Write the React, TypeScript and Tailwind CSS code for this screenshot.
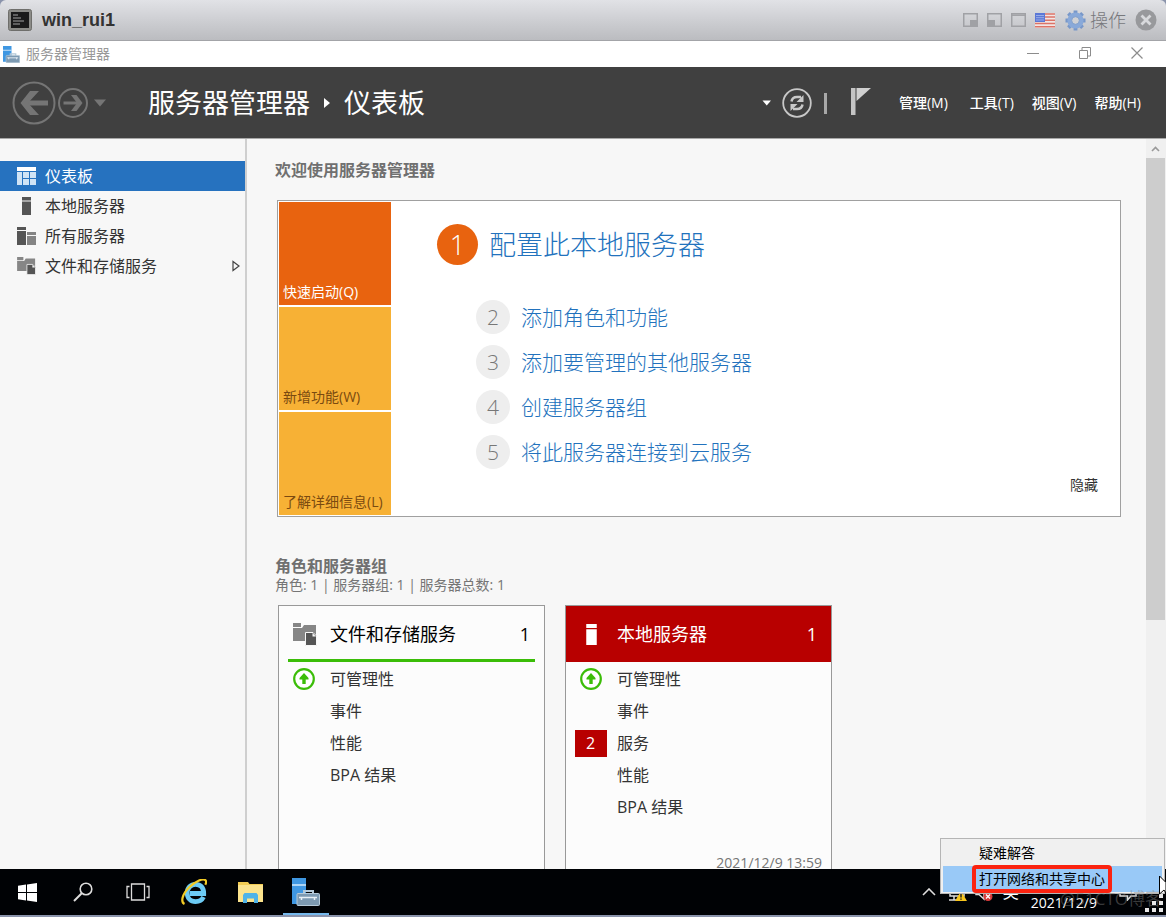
import { Fragment, ReactNode } from 'react';

type IconProps = { className?: string };

const FONT = 'font-["Open_Sans","Noto_Sans_CJK_SC",sans-serif]';

export default function App() {
  return (
    <div className={`relative flex h-screen flex-col overflow-hidden bg-[#8a93ab] ${FONT}`}>
      <ConsoleBar />
      <WindowBar />
      <Header />
      <div className="flex min-h-0 flex-1 border-t border-[#a8a8a8] bg-[#f7f7f7]">
        <Sidebar />
        <Dashboard />
        <Scrollbar />
      </div>
      <Taskbar />
      <NetworkMenu />
    </div>
  );
}

/* ---------- top bars ---------- */

function ConsoleBar() {
  return (
    <div className="flex h-[41px] shrink-0 items-center justify-between rounded-t-md border-b border-[#a3a4a8] bg-linear-to-b from-[#e1e2e6] to-[#bbbcc0] pr-[9px] pl-2">
      <div className="flex items-center gap-[10px]">
        <svg viewBox="0 0 24 22" className="h-[22px] w-6">
          <rect x="0.5" y="0.5" width="23" height="21" rx="2" fill="#8b8b87" stroke="#6e6e6b" />
          <rect x="3" y="3" width="18" height="16" fill="#1b1b1b" />
          <path d="M5 6h5M5 9h8M5 12h11M5 15h7" stroke="#777" strokeWidth="1.5" />
        </svg>
        <h1 className='font-["Liberation_Sans",sans-serif] text-[18px] leading-6 font-bold text-[#333]'>win_rui1</h1>
      </div>
      <div className="flex items-center text-[#a0a1a5]">
        <button aria-label="Dock right" className="mr-[9px]">
          <svg viewBox="0 0 15 14" className="h-[14px] w-[15px]">
            <rect x="0.75" y="0.75" width="13.5" height="12.5" fill="none" stroke="currentColor" strokeWidth="1.5" />
            <rect x="7" y="7" width="7" height="6" fill="currentColor" />
          </svg>
        </button>
        <button aria-label="Dock left" className="mr-[9px]">
          <svg viewBox="0 0 15 14" className="h-[14px] w-[15px]">
            <rect x="0.75" y="0.75" width="13.5" height="12.5" fill="none" stroke="currentColor" strokeWidth="1.5" />
            <rect x="1" y="7" width="7" height="6" fill="currentColor" />
          </svg>
        </button>
        <button aria-label="Maximize console" className="mr-[9px]">
          <svg viewBox="0 0 15 14" className="h-[14px] w-[15px]">
            <rect x="0.75" y="0.75" width="13.5" height="12.5" fill="none" stroke="currentColor" strokeWidth="1.5" />
            <path d="M1 2.2h13" stroke="currentColor" strokeWidth="1.5" />
          </svg>
        </button>
        <button aria-label="Keyboard layout" className="mr-[10px]">
          <svg viewBox="0 0 20 15" className="h-[15px] w-5">
            <rect width="20" height="15" fill="#f2e6e4" />
            <path d="M0 1h20M0 4h20M0 7.2h20M0 10.5h20M0 13.8h20" stroke="#dc7468" strokeWidth="1.5" />
            <rect width="10" height="9" fill="#5b78d6" />
            <path d="M1.5 2.5h8M1.5 4.7h8M1.5 7h8" stroke="#dbe3fa" strokeDasharray="1 1" />
          </svg>
        </button>
        <button className="mr-[9px] flex items-center gap-1 text-[18px] leading-6 font-light text-[#77787c]">
          <GearIcon className="size-[21px]" />
          操作
        </button>
        <button aria-label="Close console">
          <svg viewBox="0 0 22 22" className="size-[22px]">
            <circle cx="11" cy="11" r="10.5" fill="#98999c" />
            <path d="m6.5 6.5 9 9m0-9-9 9" stroke="#d8d9dc" strokeWidth="2.8" />
          </svg>
        </button>
      </div>
    </div>
  );
}

function GearIcon({ className }: IconProps) {
  return (
    <svg viewBox="0 0 22 22" className={className}>
      <g stroke="#7797c9" strokeWidth="4">
        <path d="M11 0.5v21M0.5 11h21M3.6 3.6l14.8 14.8M18.4 3.6 3.6 18.4" />
      </g>
      <circle cx="11" cy="11" r="8.5" fill="#89a9d9" />
      <circle cx="11" cy="11" r="4" fill="#d0d1d4" stroke="#7f9dcb" />
    </svg>
  );
}

function WindowBar() {
  return (
    <div className="flex h-[26px] shrink-0 items-center justify-between bg-white pr-[22px] pl-[3px]">
      <div className="flex items-center gap-[6px]">
        <ServerManagerIcon className="size-[17px]" />
        <span className="text-[14px] leading-5 text-[#999]">服务器管理器</span>
      </div>
      <div className="flex items-center gap-[38px] pb-[2px] text-[#8c8c8c]">
        <button aria-label="Minimize">
          <svg viewBox="0 0 14 14" className="size-[14px]">
            <path d="M1 7.5h12" stroke="currentColor" />
          </svg>
        </button>
        <button aria-label="Restore">
          <svg viewBox="0 0 14 14" className="size-[14px]" fill="none" stroke="currentColor">
            <path d="M1.5 4.5h8v8h-8zM4 4V1.5h8.5v8.5H10" />
          </svg>
        </button>
        <button aria-label="Close">
          <svg viewBox="0 0 14 14" className="size-[14px]">
            <path d="m1.5 1.5 11 11m0-11-11 11" stroke="currentColor" strokeWidth="1.2" />
          </svg>
        </button>
      </div>
    </div>
  );
}

function ServerManagerIcon({ className }: IconProps) {
  return (
    <svg viewBox="0 0 28 28" className={className}>
      <path d="M0 0h14v26H0z" fill="#3f97e2" />
      <path d="M0 7h14" stroke="#d5eafb" strokeWidth="1.5" />
      <path d="M12 16v-3h9v3" fill="none" stroke="#b5c9d8" strokeWidth="2" />
      <rect x="5" y="15.5" width="22.5" height="12" rx="1" fill="#7d9ab2" stroke="#b5c9d8" />
      <path d="M7 19.5h18M9.5 19v3M22.5 19v3" stroke="#e8f0f6" strokeWidth="1.5" />
    </svg>
  );
}

/* ---------- application header ---------- */

const menus = ['管理(M)', '工具(T)', '视图(V)', '帮助(H)'];

function Header() {
  return (
    <header className="flex h-[71px] shrink-0 items-center justify-between bg-[#404040] pt-px pr-[25px] pl-3 text-white">
      <div className="flex items-center">
        <button aria-label="Back">
          <svg viewBox="0 0 44 44" className="size-11" fill="none" stroke="#757575">
            <circle cx="22" cy="22" r="20.5" strokeWidth="2" />
            <path d="M36 22H12" strokeWidth="5" />
            <path d="M27 10 18 10 8.5 22l9.5 12h9L16 22z" fill="#757575" stroke="none" />
          </svg>
        </button>
        <button aria-label="Forward" className="ml-[2px]">
          <svg viewBox="0 0 30 30" className="size-[30px]" fill="none" stroke="#757575">
            <circle cx="15" cy="15" r="14" strokeWidth="2" />
            <path d="M5.5 15h16" strokeWidth="3" />
            <path d="M13 7h5.5l6 8-6 8H13l6-8z" fill="#757575" stroke="none" />
          </svg>
        </button>
        <button aria-label="History" className="ml-[6px]">
          <svg viewBox="0 0 12 8" className="h-2 w-3">
            <path d="M0 0.5h12l-6 7z" fill="#757575" />
          </svg>
        </button>
        <nav className="ml-[42px] flex items-center gap-[14px] text-[27px] leading-9">
          <span>服务器管理器</span>
          <svg viewBox="0 0 6 10" className="h-[10px] w-[6px]">
            <path d="m0 0 6 5-6 5z" fill="#fff" />
          </svg>
          <span>仪表板</span>
        </nav>
      </div>
      <div className="flex items-center">
        <button aria-label="More" className="mr-[10px]">
          <svg viewBox="0 0 10 6" className="h-[6px] w-[10px]">
            <path d="M0.5 0.5h8.500L4.750 5.500z" fill="#fff" />
          </svg>
        </button>
        <button aria-label="Refresh">
          <RefreshIcon className="size-[30px]" />
        </button>
        <span className="mr-6 ml-3 h-[21px] w-[3px] bg-[#a8a8a8]" />
        <button aria-label="Notifications" className="mr-[28px] pb-[5px]">
          <svg viewBox="0 0 20 28" className="h-7 w-5">
            <path d="M0 1h4.500v27H0z" fill="#c4c4c4" />
            <path d="M5.500 1H20L5.500 14z" fill="#d0d0d0" />
          </svg>
        </button>
        <div className="flex gap-[18px] text-[14px] leading-5 font-medium">
          {menus.map((m) => (
            <button key={m} className="first:mr-1">
              {m}
            </button>
          ))}
        </div>
      </div>
    </header>
  );
}

function RefreshIcon({ className }: IconProps) {
  return (
    <svg viewBox="0 0 30 30" className={className} fill="none" stroke="#c8c8c8">
      <circle cx="15" cy="15" r="13.8" strokeWidth="1.8" />
      <path d="M9.500 13.500c.5-3.500 2.500-4.500 5.500-4.500h4M20.500 16.500c-.5 3.500-2.500 4.500-5.500 4.500h-4" strokeWidth="2.5" />
      <path d="M21.500 7v7h-7zM8.500 23v-7h7z" fill="#c8c8c8" stroke="none" />
    </svg>
  );
}

/* ---------- sidebar ---------- */

function DashboardIcon() {
  return (
    <svg viewBox="0 0 19 18" className="h-[18px] w-[19px]">
      <path d="M0 0h19v4H0z" fill="#fff" />
      <path d="M0 5h5v13H0zM6 5h6v6H6zM13 5h6v6h-6zM6 12h6v6H6zM13 12h6v6h-6z" fill="#cfe3f5" />
    </svg>
  );
}

function ServerIcon({ className }: IconProps) {
  return (
    <svg viewBox="0 0 9 18" className={className} fill="currentColor">
      <path d="M0 0h9v3.500H0zM0 4.500h9V18H0z" />
    </svg>
  );
}

function ServersIcon() {
  return (
    <svg viewBox="0 0 19 18" className="h-[18px] w-[19px]">
      <path d="M0 0h9v3H0zM0 4h9v14H0z" fill="#555" />
      <path d="M10 5h9v3h-9zM10 9h9v9h-9z" fill="#848484" />
    </svg>
  );
}

function StorageIcon({ className }: IconProps) {
  return (
    <svg viewBox="0 0 24 23" className={className}>
      <path d="M0 0h8v4H0zM0 5h9l2-3h12v16H0z" fill="#868686" />
      <path d="M12.500 9.500h7.500l3.500 3.500V22.500h-11z" fill="#555" stroke="#f7f7f7" />
      <path d="M19.500 10v3.500h3.500z" fill="#f7f7f7" />
    </svg>
  );
}

const navItems: { label: string; icon: ReactNode; active?: boolean; more?: boolean }[] = [
  { label: '仪表板', icon: <DashboardIcon />, active: true },
  { label: '本地服务器', icon: <ServerIcon className="h-[18px] w-[9px] text-[#555]" /> },
  { label: '所有服务器', icon: <ServersIcon /> },
  { label: '文件和存储服务', icon: <StorageIcon className="h-[18px] w-[19px]" />, more: true },
];

function Sidebar() {
  return (
    <aside className="w-[247px] shrink-0 border-r-2 border-[#cfcfcf] pt-[22px]">
      {navItems.map((item) => (
        <button
          key={item.label}
          className={`flex h-[30px] w-full items-center pr-[5px] pl-[17px] text-[16px] leading-6 ${
            item.active ? 'bg-[#2672bf] text-white' : 'text-[#333]'
          }`}>
          <span className="mr-[9px] flex w-[19px] justify-center">{item.icon}</span>
          {item.label}
          {item.more && (
            <svg viewBox="0 0 8 12" className="ml-auto h-3 w-2">
              <path d="M1 1.500v9L7 6z" fill="none" stroke="#444" strokeWidth="1.2" />
            </svg>
          )}
        </button>
      ))}
    </aside>
  );
}

/* ---------- dashboard ---------- */

const tiles = [
  { label: '快速启动(Q)', className: 'bg-[#e8630f] text-white' },
  { label: '新增功能(W)', className: 'bg-[#f7b135] text-[#7a4a10]' },
  { label: '了解详细信息(L)', className: 'bg-[#f7b135] text-[#7a4a10]' },
];

const steps = ['添加角色和功能', '添加要管理的其他服务器', '创建服务器组', '将此服务器连接到云服务'];

function Dashboard() {
  return (
    <main className="min-w-0 flex-1 overflow-hidden pt-[21px] pr-[25px] pl-[28px]">
      <h2 className="text-[16px] leading-5 font-bold text-[#707070]">欢迎使用服务器管理器</h2>

      <section className="mt-5 ml-[2px] flex border border-[#a0a0a0] bg-white p-px">
        <div className="flex w-[112px] flex-col gap-[2px]">
          {tiles.map((t) => (
            <button
              key={t.label}
              className={`flex h-[103px] items-end pb-[3px] pl-1 text-left text-[14px] leading-5 whitespace-nowrap ${t.className}`}>
              {t.label}
            </button>
          ))}
        </div>
        <div className="flex flex-1 flex-col pt-[22px] pl-[46px]">
          <a href="#" className="flex items-center gap-[11px] text-[27px] leading-9 font-light text-[#2272bd]">
            <span className="flex size-[41px] items-center justify-center rounded-full bg-[#e8630f] text-white">1</span>
            配置此本地服务器
          </a>
          <div className="mt-[35px] ml-[39px] flex flex-col gap-[11px]">
            {steps.map((s, i) => (
              <a
                key={s}
                href="#"
                className="flex items-center gap-[11px] text-[21px] leading-7 font-light text-[#2272bd]">
                <span className="flex size-[34px] items-center justify-center rounded-full bg-[#eee] text-[#777]">
                  {i + 2}
                </span>
                {s}
              </a>
            ))}
          </div>
          <button className="mt-[6px] mr-[21px] self-end text-[14px] leading-5 text-[#333]">隐藏</button>
        </div>
      </section>

      <h2 className="mt-[39px] text-[16px] leading-5 font-bold text-[#707070]">角色和服务器组</h2>
      <p className="text-[14px] leading-[18px] text-[#757575]">角色: 1 | 服务器组: 1 | 服务器总数: 1</p>

      <div className="mt-[11px] ml-[3px] flex gap-5">
        <RoleCard
          title="文件和存储服务"
          icon={<StorageIcon className="h-[23px] w-6" />}
          rows={['可管理性', '事件', '性能', 'BPA 结果']}
        />
        <RoleCard
          title="本地服务器"
          alert
          icon={<ServerIcon className="h-[21px] w-[11px]" />}
          rows={['可管理性', '事件', '服务', '性能', 'BPA 结果']}
          time="2021/12/9 13:59"
        />
      </div>
    </main>
  );
}

type RoleCardProps = { title: string; icon: ReactNode; rows: string[]; alert?: boolean; time?: string };

function RoleCard({ title, icon, rows, alert, time }: RoleCardProps) {
  return (
    <article className="flex min-h-[290px] w-[267px] flex-col border border-[#999] bg-[#fcfcfc] text-[#333]">
      <div
        className={`flex items-center pr-[14px] text-[18px] leading-6 ${
          alert ? 'h-14 bg-[#b80000] text-white' : 'h-[53px] pt-[3px] text-black'
        }`}>
        <span className="flex w-[51px] justify-center">{icon}</span>
        <h3>{title}</h3>
        <span className="ml-auto">1</span>
      </div>
      {!alert && <div className="mx-[9px] h-[3px] bg-[#3bbd08]" />}
      <ul className="pt-px text-[16px] leading-6">
        {rows.map((row) => (
          <li key={row} className="flex h-8 items-center">
            <span className="mr-[2px] flex w-[49px] justify-center">
              {row === '可管理性' && <UpIcon />}
              {row === '服务' && (
                <span className="flex h-[27px] w-8 items-center justify-center bg-[#b80000] text-white">2</span>
              )}
            </span>
            {row}
          </li>
        ))}
      </ul>
      {time && <p className="mt-[30px] pr-[9px] text-right text-[14px] leading-5 text-[#757575]">{time}</p>}
    </article>
  );
}

function UpIcon() {
  return (
    <svg viewBox="0 0 22 22" className="size-[22px]">
      <circle cx="11" cy="11" r="9.8" fill="#fff" stroke="#3bbd08" strokeWidth="2.2" />
      <path d="M11 5 6.500 10v1.500h2.800V16h3.400v-4.500h2.800V10z" fill="#3bbd08" />
    </svg>
  );
}

function Scrollbar() {
  return (
    <div className="flex w-5 shrink-0 flex-col bg-[#f0f0f0] pr-px">
      <button aria-label="Scroll up" className="flex h-[19px] items-center justify-center">
        <svg viewBox="0 0 9 6" className="h-[6px] w-[9px]">
          <path d="m1 5 3.500-3.500L8 5" fill="none" stroke="#999" strokeWidth="1.6" />
        </svg>
      </button>
      <div className="min-h-0 flex-1">
        <div className="h-[65%] bg-[#cdcdcd]" />
      </div>
    </div>
  );
}

/* ---------- taskbar ---------- */

const pinned: { label: string; icon: ReactNode }[] = [
  {
    label: 'Start',
    icon: (
      <svg viewBox="0 0 19 19" className="size-[19px]" fill="#fff">
        <path d="M0 2.800 8 1.600V9H0zM9 1.400 19 0v9H9zM0 10h8v7.400l-8-1.200zM9 10h10v9L9 17.600z" />
      </svg>
    ),
  },
  {
    label: 'Search',
    icon: (
      <svg viewBox="0 0 20 20" className="size-5" fill="none" stroke="#ddd">
        <circle cx="13" cy="7" r="5.8" strokeWidth="1.6" />
        <path d="m9 11-8 8" strokeWidth="2" />
      </svg>
    ),
  },
  {
    label: 'Task view',
    icon: (
      <svg viewBox="0 0 24 18" className="h-[18px] w-6" fill="none" stroke="#ddd" strokeWidth="1.3">
        <path d="M5.500 1h13v16h-13zM3.500 3.500h-2.500v11h2.500M20.500 3.500H23v11h-2.500" />
      </svg>
    ),
  },
];

const apps: { label: string; icon: ReactNode; open?: boolean }[] = [
  {
    label: 'Internet Explorer',
    icon: (
      <svg viewBox="0 0 26 26" className="size-[26px]" fill="none">
        <path
          d="M22.500 18c-1.500 3-4.500 4.600-8 4.600-5 0-8.300-3.600-8.300-8.600s3.500-8.700 8.300-8.700c5 0 8.300 3.400 8.200 9.200H9"
          stroke="#6ccbf5"
          strokeWidth="4.8"
        />
        <path
          d="M3.500 25C-.5 23 1 15.500 8 8.500 14 2.500 22-1 24.500 1.200c1 1 .8 2.500-.2 4.500"
          stroke="#f2cb25"
          strokeWidth="2.2"
        />
      </svg>
    ),
  },
  {
    label: 'File Explorer',
    icon: (
      <svg viewBox="0 0 25 21" className="h-[21px] w-[25px]">
        <path d="M0 0h10l1.500 2H25v18H0z" fill="#f2cc53" />
        <path d="M0 3h25v17H0z" fill="#fbe38d" />
        <path d="M5 21V13l1.500-2h12l1.500 2v8h-4v-4.500H9V21z" fill="#4fb3e8" />
      </svg>
    ),
  },
  { label: 'Server Manager', icon: <ServerManagerIcon className="size-7" />, open: true },
];

function Taskbar() {
  return (
    <footer className="mb-[2px] flex h-[46px] shrink-0 justify-between bg-[#000205] text-white">
      <div className="flex">
        {pinned.map((p) => (
          <button key={p.label} aria-label={p.label} className="flex w-[55px] items-center justify-center">
            {p.icon}
          </button>
        ))}
        <span className="w-px" />
        {apps.map((a) => (
          <button
            key={a.label}
            aria-label={a.label}
            className="flex w-14 flex-col items-center justify-end">
            <span className="flex flex-1 items-center pt-[2px]">{a.icon}</span>
            {a.open ? <span className="h-[2px] w-[46px] bg-[#76b9ed]" /> : <span className="h-[2px]" />}
          </button>
        ))}
      </div>
      <div className="flex items-center pr-[29px]">
        <button aria-label="Show hidden icons" className="mr-[13px]">
          <svg viewBox="0 0 14 8" className="h-2 w-[14px]">
            <path d="m1 7 6-6 6 6" fill="none" stroke="#ddd" strokeWidth="1.6" />
          </svg>
        </button>
        <button aria-label="Network" className="mr-2">
          <svg viewBox="0 0 18 18" className="size-[18px]">
            <path d="M1 3h14v10H1zM0 17h12M5 13v4" fill="none" stroke="#ddd" strokeWidth="1.5" />
            <path d="M12 8l6 10H6z" fill="#f8c51c" />
            <path d="M12 11v3.500M12 15.500v1.200" stroke="#222" strokeWidth="1.5" />
          </svg>
        </button>
        <button aria-label="Volume" className="mr-[10px]">
          <svg viewBox="0 0 18 18" className="size-[18px]">
            <path d="M1 6h3l5-5v15l-5-4.500H1z" fill="none" stroke="#ddd" strokeWidth="1.5" />
            <circle cx="13" cy="13.5" r="4.5" fill="#d83b3b" />
            <path d="m11 11.500 4 4m0-4-4 4" stroke="#fff" strokeWidth="1.3" />
          </svg>
        </button>
        <button className="mr-3 text-[16px] leading-6">英</button>
        <time className="mr-[22px] self-end pb-[2px] text-[14px] leading-5">2021/12/9</time>
        <button aria-label="Action center">
          <svg viewBox="0 0 18 18" className="size-[18px]" fill="none" stroke="#ddd" strokeWidth="1.5">
            <path d="M1 1h16v12h-5l-3.500 4v-4H1z" />
          </svg>
        </button>
      </div>
    </footer>
  );
}

/* Context menu of the tray's network icon, with the marked entry */
function NetworkMenu() {
  return (
    <Fragment>
      <div className="absolute right-px bottom-[23px] w-[225px] border border-[#b5b5b5] bg-[#f0f0f0] px-[2px] pt-[1px] pb-px text-[14px] leading-5 text-black">
        <button className="flex h-[26px] w-full items-center pl-[36px]">疑难解答</button>
        <button className="flex h-[26px] w-full items-center bg-[#99c9f7] pl-[29px]">
          <span className="flex h-[28px] items-center rounded-[4px] border-4 border-[#fb2310] px-[3px] pb-px">
            打开网络和共享中心
          </span>
        </button>
      </div>
      <span className="absolute right-[4px] bottom-[6px] text-[17px] leading-6 whitespace-nowrap text-[#808080]/45">
        @51CTO博客
      </span>
      <svg viewBox="0 0 20 18" className="absolute right-[2px] bottom-[5px] h-[18px] w-5" fill="#e8e8e8">
        <path d="M15 0h4v4h-4zM15 7h4v4h-4zM15 14h4v4h-4zM8 7h4v4H8zM8 14h4v4H8zM1 14h4v4H1z" />
      </svg>
      <svg viewBox="0 0 7 20" className="absolute right-0 bottom-[22px] h-5 w-[7px]">
        <path d="M0.500 1v18L5 15l2 3V7.500z" fill="#fff" stroke="#000" />
      </svg>
    </Fragment>
  );
}
